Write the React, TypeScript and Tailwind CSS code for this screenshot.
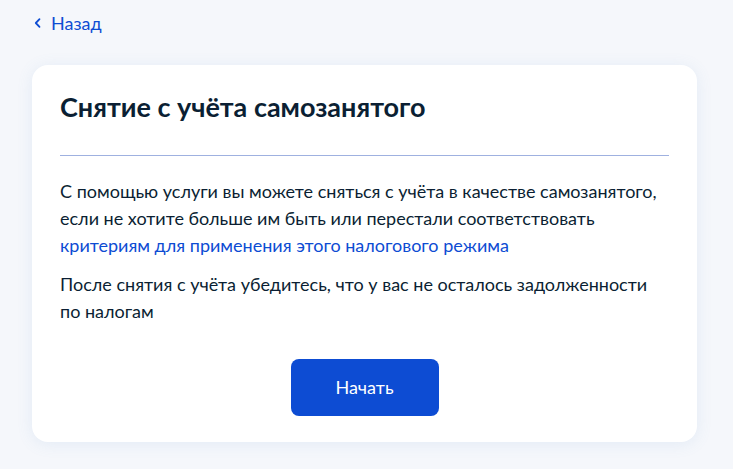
export default function App() {
  return (
    <div className="min-h-[469px] w-full bg-[#f5f7fb] font-['Lato',sans-serif] text-[#0b1f33]">
      <div className="px-[32px] pt-[10px]">
        <a href="#" className="flex h-[26px] items-center text-[18px] leading-[26px] text-[#0d4cd3]">
          <svg width="12" height="12" viewBox="0 0 12 12" fill="none">
            <path d="M7.5 2.2L3.8 6l3.7 3.8" stroke="#0d4cd3" strokeWidth="1.8" strokeLinecap="round" strokeLinejoin="round" />
          </svg>
          <span className="ml-[7px]">Назад</span>
        </a>
      </div>
      <div className="mx-[32px] mt-[29px] w-[665px] rounded-[16px] bg-white px-[28px] pb-[26px] pt-[24px] shadow-[0_2px_16px_rgba(102,150,204,0.12)]">
        <h1 className="text-[27px] font-bold leading-[36px]">Снятие с учёта самозанятого</h1>
        <div className="mt-[30px] h-px bg-[#9fb1e0]" />
        <p className="mt-[22px] text-[18px] leading-[27px]">
          С помощью услуги вы можете сняться с учёта в качестве самозанятого, если не хотите больше им быть или перестали соответствовать{" "}
          <a href="#" className="text-[#0d4cd3]">критериям для применения этого налогового режима</a>
        </p>
        <p className="mt-[12px] text-[18px] leading-[27px]">
          После снятия с учёта убедитесь, что у вас не осталось задолженности по налогам
        </p>
        <div className="mt-[34px] flex justify-center">
          <button className="h-[57px] w-[148px] rounded-[8px] bg-[#0d4cd3] text-[18px] text-white">Начать</button>
        </div>
      </div>
    </div>
  );
}
